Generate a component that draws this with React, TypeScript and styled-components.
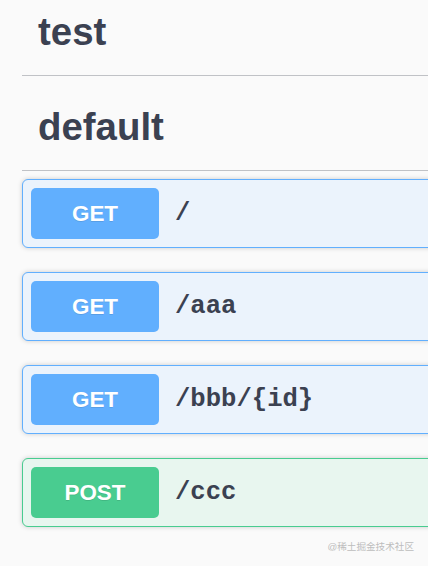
import React from "react";
import styled, { createGlobalStyle } from "styled-components";

const GlobalStyle = createGlobalStyle`
  html, body {
    margin: 0;
    padding: 0;
    background: #fafafa;
    overflow: hidden;
  }
  body {
    font-family: "Liberation Sans", Arial, sans-serif;
  }
`;

const Page = styled.div`
  position: relative;
  width: 428px;
  height: 566px;
  overflow: hidden;
  background: #fafafa;
`;

const Wrapper = styled.div`
  padding-left: 22px;
  width: 620px;
  box-sizing: border-box;
`;

const TagHeader = styled.h3<{ $first?: boolean }>`
  margin: 0 0 8px;
  padding: ${(p) => (p.$first ? "8px" : "19px")} 32px 19px 16px;
  font-family: "Liberation Sans", Arial, sans-serif;
  font-size: 38.4px;
  line-height: 48px;
  font-weight: 700;
  color: #3b4151;
  border-bottom: 1px solid rgba(59, 65, 81, 0.3);
`;

const BlockList = styled.div`
  display: flex;
  flex-direction: column;
  gap: 24px;
`;

const colors = {
  get: "#61affe",
  post: "#49cc90",
};

const Block = styled.div<{ $color: string; $bg: string }>`
  display: flex;
  align-items: center;
  padding: 8px;
  border: 1px solid ${(p) => p.$color};
  border-radius: 6px;
  background: ${(p) => p.$bg};
  box-shadow: 0 0 5px rgba(0, 0, 0, 0.19);
`;

const Method = styled.span<{ $color: string }>`
  display: inline-block;
  width: 128px;
  padding: 12px 0 11px;
  line-height: 28px;
  text-align: center;
  border-radius: 5px;
  background: ${(p) => p.$color};
  color: #fff;
  font-family: "Liberation Sans", Arial, sans-serif;
  font-size: 22.4px;
  font-weight: 700;
  text-shadow: 0 1px 0 rgba(0, 0, 0, 0.1);
`;

const Path = styled.span`
  padding: 0 16px;
  font-family: "Liberation Mono", "Courier New", monospace;
  font-size: 25.6px;
  font-weight: 700;
  color: #3b4151;
`;

const Watermark = styled.div`
  position: absolute;
  right: 14px;
  top: 541px;
  font-family: "Liberation Sans", "Noto Sans CJK SC", sans-serif;
  font-size: 9.6px;
  line-height: 12px;
  color: #bdbdbd;
  white-space: nowrap;
`;

const ops = [
  { method: "GET", path: "/", type: "get" as const },
  { method: "GET", path: "/aaa", type: "get" as const },
  { method: "GET", path: "/bbb/{id}", type: "get" as const },
  { method: "POST", path: "/ccc", type: "post" as const },
];

const bgs = {
  get: "#ebf3fc",
  post: "#e8f6ef",
};

export default function App() {
  return (
    <Page>
      <GlobalStyle />
      <Wrapper>
        <TagHeader $first>test</TagHeader>
        <TagHeader>default</TagHeader>
        <BlockList>
          {ops.map((op) => (
            <Block key={op.path} $color={colors[op.type]} $bg={bgs[op.type]}>
              <Method $color={colors[op.type]}>{op.method}</Method>
              <Path>{op.path}</Path>
            </Block>
          ))}
        </BlockList>
      </Wrapper>
      <Watermark>@稀土掘金技术社区</Watermark>
    </Page>
  );
}
